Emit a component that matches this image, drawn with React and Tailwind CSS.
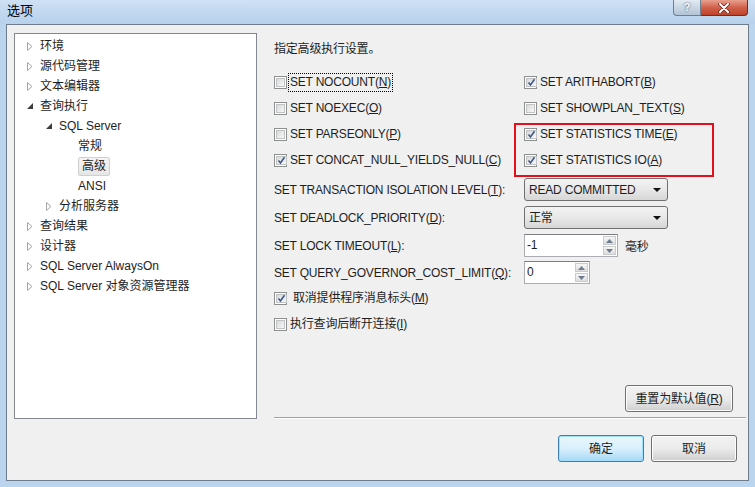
import React from 'react';

const ui = "font-['Liberation_Sans','Noto_Sans_CJK_SC',sans-serif]";

// Win7 style checkbox
const CheckBox = ({ checked }) => (
  <span className="w-[13px] h-[13px] shrink-0 border border-[#8e8f8f] bg-white p-[1px] flex">
    <span className="flex-1 border border-[#c0c2c4] bg-gradient-to-br from-[#d8d9db] to-[#f8f8f8] flex items-center justify-center">
      {checked && (
        <svg width="9" height="9" viewBox="0 0 9 9">
          <path d="M1.5 4.5 L3.5 7 L7.5 1.2" fill="none" stroke="#3d5a8a" strokeWidth="1.6" />
        </svg>
      )}
    </span>
  </span>
);

const Key = ({ k }) => (
  <>
    (<u>{k}</u>)
  </>
);

const CheckRow = ({ checked, children, focus }) => (
  <div className="h-[26px] flex items-center">
    <CheckBox checked={checked} />
    <span
      className={
        'ml-[2px] px-[1px] leading-[17px] whitespace-nowrap ' +
        (focus ? 'outline-1 outline-dotted outline-black' : '')
      }
    >
      {children}
    </span>
  </div>
);

const Collapsed = () => (
  <svg width="6" height="9" viewBox="0 0 6 9">
    <polygon points="0.5,0.5 5,4.5 0.5,8.5" fill="white" stroke="#a6a6a6" />
  </svg>
);

const Expanded = () => (
  <svg width="6" height="6" viewBox="0 0 6 6">
    <polygon points="6,0 6,6 0,6" fill="#3c3c3c" />
  </svg>
);

const TreeItem = ({ level, arrow, label, selected }) => {
  const pad = ['pl-[7px]', 'pl-[26px]', 'pl-[45px]'][level];
  return (
    <div className={'h-[20px] flex items-center ' + pad}>
      <span className="w-[16px] flex items-center justify-center">
        {arrow === 'c' && <Collapsed />}
        {arrow === 'e' && <Expanded />}
      </span>
      <span
        className={
          'ml-[2px] whitespace-nowrap leading-[17px] ' +
          (selected
            ? '-ml-[2px] px-[3px] h-[19px] flex items-center border border-[#d0d0d0] rounded-[2px] bg-gradient-to-b from-[#f4f4f4] to-[#e6e6e6]'
            : '')
        }
      >
        {label}
      </span>
    </div>
  );
};

const Combo = ({ value }) => (
  <div className="w-[144px] h-[23px] border border-[#707070] rounded-[3px] bg-gradient-to-b from-[#f3f3f3] via-[#e8e8e8] to-[#d6d6d6] flex items-center pl-[4px] pr-[6px]">
    <span className="flex-1">{value}</span>
    <svg width="8" height="4" viewBox="0 0 8 4">
      <polygon points="0,0 8,0 4,4" fill="#111" />
    </svg>
  </div>
);

const SpinArrow = ({ up }) => (
  <span className="flex-1 border border-[#c8cacc] bg-gradient-to-b from-[#f6f6f6] to-[#dedede] flex items-center justify-center">
    <svg width="7" height="4" viewBox="0 0 7 4">
      <polygon points={up ? '0,4 7,4 3.5,0' : '0,0 7,0 3.5,4'} fill="#6d7b90" />
    </svg>
  </span>
);

const Spin = ({ value, width }) => (
  <div className={'h-[23px] border border-[#abadb3] border-t-[#7a7d84] bg-white flex ' + width}>
    <span className="flex-1 pl-[2px] leading-[21px]">{value}</span>
    <span className="w-[15px] flex flex-col p-[1px] gap-[1px]">
      <SpinArrow up />
      <SpinArrow />
    </span>
  </div>
);

const Btn = ({ children, primary, w }) => (
  <button
    className={
      'h-[27px] rounded-[3px] flex items-center justify-center bg-gradient-to-b ' +
      w +
      (primary
        ? ' border border-[#3c7fb1] from-[#eaf6fd] via-[#d9f0fc] to-[#a7d9f5] shadow-[inset_0_0_0_1px_#9ee0fc]'
        : ' border border-[#707070] from-[#f2f2f2] via-[#ebebeb] to-[#cfcfcf] shadow-[inset_0_0_0_1px_#fcfcfc]')
    }
  >
    {children}
  </button>
);

const tree = [
  { level: 0, arrow: 'c', label: '环境' },
  { level: 0, arrow: 'c', label: '源代码管理' },
  { level: 0, arrow: 'c', label: '文本编辑器' },
  { level: 0, arrow: 'e', label: '查询执行' },
  { level: 1, arrow: 'e', label: 'SQL Server' },
  { level: 2, label: '常规' },
  { level: 2, label: '高级', selected: true },
  { level: 2, label: 'ANSI' },
  { level: 1, arrow: 'c', label: '分析服务器' },
  { level: 0, arrow: 'c', label: '查询结果' },
  { level: 0, arrow: 'c', label: '设计器' },
  { level: 0, arrow: 'c', label: 'SQL Server AlwaysOn' },
  { level: 0, arrow: 'c', label: 'SQL Server 对象资源管理器' },
];

export default function App() {
  return (
    <div className={'relative w-[755px] h-[487px] overflow-hidden bg-[#bcd5ef] text-[12px] text-[#1e1e1e] ' + ui}>
      {/* title bar */}
      <div className="h-[24px] flex items-start bg-gradient-to-b from-[#cfe1f4] via-[#c2d8f0] to-[#b8d1ec]">
        <span className="pl-[7px] pt-[2px] text-[13px] leading-[17px] text-black">选项</span>
        <div className="ml-auto mr-[7px] flex h-[16px]">
          <span className="w-[28px] h-full rounded-bl-[4px] border border-[#6f7f92] border-t-0 bg-gradient-to-b from-[#e3ebf4] via-[#c9d6e3] to-[#b3c4d6] flex items-center justify-center text-[11px] font-bold text-white [text-shadow:0_0_2px_#334]">
            ?
          </span>
          <span className="w-[47px] h-full rounded-br-[4px] border border-l-0 border-[#6b2e24] border-t-0 bg-gradient-to-b from-[#e8a08e] via-[#d0604a] to-[#c0412a] flex items-center justify-center">
            <svg width="12" height="10" viewBox="0 0 12 10">
              <path d="M2 1 L10 9 M10 1 L2 9" stroke="#5a2018" strokeWidth="3.4" strokeLinecap="round" />
              <path d="M2 1 L10 9 M10 1 L2 9" stroke="#fff" strokeWidth="2" strokeLinecap="round" />
            </svg>
          </span>
        </div>
      </div>

      {/* client area */}
      <div className="ml-[6px] w-[743px] h-[457px] border border-[#6e7c8c] bg-[#f0f0f0] flex flex-col">
        <div className="flex mt-[8px]">
          {/* tree */}
          <div className="ml-[7px] w-[243px] h-[386px] border border-[#828790] bg-white pt-[2px]">
            {tree.map((t, i) => (
              <TreeItem key={i} {...t} />
            ))}
          </div>

          {/* settings */}
          <div className="ml-[17px] w-[472px] flex flex-col tracking-[-0.2px]">
            <div className="mt-[8px] leading-[16px]">指定高级执行设置。</div>
            <div className="mt-[12px] grid grid-cols-[250px_auto]">
              <CheckRow focus>
                SET NOCOUNT<Key k="N" />
              </CheckRow>
              <CheckRow checked>
                SET ARITHABORT<Key k="B" />
              </CheckRow>
              <CheckRow>
                SET NOEXEC<Key k="O" />
              </CheckRow>
              <CheckRow>
                SET SHOWPLAN_TEXT<Key k="S" />
              </CheckRow>
              <CheckRow>
                SET PARSEONLY<Key k="P" />
              </CheckRow>
              <CheckRow checked>
                SET STATISTICS TIME<Key k="E" />
              </CheckRow>
              <CheckRow checked>
                SET CONCAT_NULL_YIELDS_NULL<Key k="C" />
              </CheckRow>
              <CheckRow checked>
                SET STATISTICS IO<Key k="A" />
              </CheckRow>
            </div>

            <div className="mt-[5px] grid grid-cols-[250px_auto] items-center gap-y-[5px]">
              <span>
                SET TRANSACTION ISOLATION LEVEL<Key k="T" />:
              </span>
              <Combo value="READ COMMITTED" />
              <span>
                SET DEADLOCK_PRIORITY<Key k="D" />:
              </span>
              <Combo value="正常" />
              <span>
                SET LOCK TIMEOUT<Key k="L" />:
              </span>
              <div className="flex items-center">
                <Spin value="-1" width="w-[94px]" />
                <span className="ml-[7px] mt-[2px]">毫秒</span>
              </div>
              <span className="-mt-[1px]">
                SET QUERY_GOVERNOR_COST_LIMIT<Key k="Q" />:
              </span>
              <div className="flex -mt-[1px]">
                <Spin value="0" width="w-[66px]" />
              </div>
            </div>

            <div className="mt-[1px]">
              <CheckRow checked>
                <span className="ml-[3px]">取消提供程序消息标头</span>
                <Key k="M" />
              </CheckRow>
              <CheckRow>
                执行查询后断开连接<Key k="I" />
              </CheckRow>
            </div>

            <div className="mt-[48px] flex justify-end pr-[13px]">
              <Btn w="w-[108px] h-[24px]">
                重置为默认值<Key k="R" />
              </Btn>
            </div>
            <div className="mt-auto h-[2px] border-t border-[#a0a0a0] border-b-white border-b" />
          </div>
        </div>

        <div className="mt-[16px] flex justify-end gap-[7px] pr-[11px]">
          <Btn primary w="w-[86px]">
            确定
          </Btn>
          <Btn w="w-[86px]">取消</Btn>
        </div>
      </div>

      {/* annotation box */}
      <div className="absolute left-[514px] top-[123px] w-[200px] h-[54px] border-2 border-[#e3101b]" />
    </div>
  );
}
